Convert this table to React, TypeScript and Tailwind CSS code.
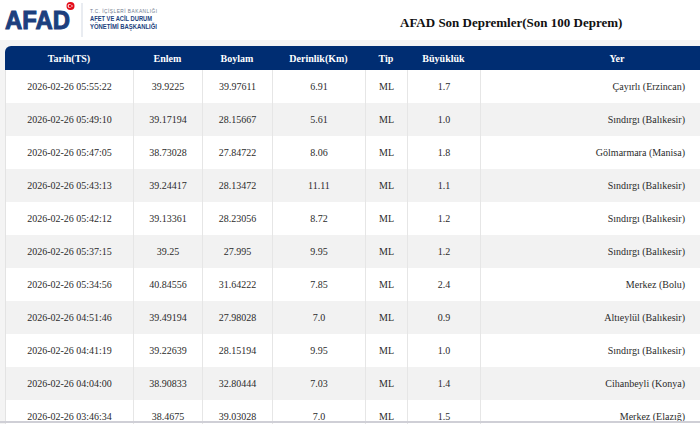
import React from "react";

const rows: string[][] = [
  ["2026-02-26 05:55:22", "39.9225", "39.97611", "6.91", "ML", "1.7", "Çayırlı (Erzincan)"],
  ["2026-02-26 05:49:10", "39.17194", "28.15667", "5.61", "ML", "1.0", "Sındırgı (Balıkesir)"],
  ["2026-02-26 05:47:05", "38.73028", "27.84722", "8.06", "ML", "1.8", "Gölmarmara (Manisa)"],
  ["2026-02-26 05:43:13", "39.24417", "28.13472", "11.11", "ML", "1.1", "Sındırgı (Balıkesir)"],
  ["2026-02-26 05:42:12", "39.13361", "28.23056", "8.72", "ML", "1.2", "Sındırgı (Balıkesir)"],
  ["2026-02-26 05:37:15", "39.25", "27.995", "9.95", "ML", "1.2", "Sındırgı (Balıkesir)"],
  ["2026-02-26 05:34:56", "40.84556", "31.64222", "7.85", "ML", "2.4", "Merkez (Bolu)"],
  ["2026-02-26 04:51:46", "39.49194", "27.98028", "7.0", "ML", "0.9", "Altıeylül (Balıkesir)"],
  ["2026-02-26 04:41:19", "39.22639", "28.15194", "9.95", "ML", "1.0", "Sındırgı (Balıkesir)"],
  ["2026-02-26 04:04:00", "38.90833", "32.80444", "7.03", "ML", "1.4", "Cihanbeyli (Konya)"],
  ["2026-02-26 03:46:34", "38.4675", "39.03028", "7.0", "ML", "1.5", "Merkez (Elazığ)"],
];

const headers = ["Tarih(TS)", "Enlem", "Boylam", "Derinlik(Km)", "Tip", "Büyüklük", "Yer"];

function Logo() {
  return (
    <svg width="170" height="40" viewBox="0 0 170 40">
      <text
        x="5"
        y="29"
        fontFamily="'Liberation Sans', Arial, sans-serif"
        fontWeight="900"
        fontSize="25"
        fill="#1c3f7e"
        textLength="65"
        lengthAdjust="spacingAndGlyphs"
        stroke="#1c3f7e"
        strokeWidth="1"
      >
        AFAD
      </text>
      <circle cx="70.5" cy="6" r="4" fill="#e30a17" />
      <circle cx="69.6" cy="6" r="2" fill="#ffffff" />
      <circle cx="70.2" cy="6" r="1.6" fill="#e30a17" />
      <circle cx="72" cy="6" r="0.7" fill="#ffffff" />
      <line x1="82" y1="3" x2="82" y2="37" stroke="#d3d9e3" strokeWidth="1" />
      <text
        x="90"
        y="12.5"
        fontFamily="'Liberation Sans', Arial, sans-serif"
        fontSize="4.8"
        fill="#6f7a8e"
        textLength="67"
        lengthAdjust="spacing"
      >
        T.C. İÇİŞLERİ BAKANLIĞI
      </text>
      <text
        x="90"
        y="21"
        fontFamily="'Liberation Sans', Arial, sans-serif"
        fontWeight="700"
        fontSize="6.6"
        fill="#1c3f7e"
        textLength="62"
        lengthAdjust="spacingAndGlyphs"
      >
        AFET VE ACİL DURUM
      </text>
      <text
        x="90"
        y="28.5"
        fontFamily="'Liberation Sans', Arial, sans-serif"
        fontWeight="700"
        fontSize="6.6"
        fill="#1c3f7e"
        textLength="67"
        lengthAdjust="spacingAndGlyphs"
      >
        YÖNETİMİ BAŞKANLIĞI
      </text>
    </svg>
  );
}

export default function App() {
  return (
    <div
      className="relative w-[700px] h-[424px] overflow-hidden bg-[#f4f4f4]"
      style={{ fontFamily: "'Liberation Serif', 'Times New Roman', serif" }}
    >
      <div className="h-[40px] bg-white flex items-center">
        <Logo />
        <h1 className="ml-[230px] text-[13px] font-bold text-[#111] leading-none mt-[4px]">
          AFAD Son Depremler(Son 100 Deprem)
        </h1>
      </div>
      <div className="pt-[6px] pl-[5px]">
        <div className="w-[749px]">
          <div className="grid grid-cols-[128px_69px_70px_93px_42px_73px_274px] h-[24px] bg-[#002d72] rounded-t-[6px] text-white text-[10px] font-bold">
            {headers.map((h) => (
              <div key={h} className="flex items-center justify-center">
                {h}
              </div>
            ))}
          </div>
          {rows.map((r, i) => (
            <div
              key={i}
              className={`grid grid-cols-[128px_69px_70px_93px_42px_73px_274px] h-[33px] text-[10px] text-[#2b2b2b] border-l border-[#e3e3e3] ${
                i % 2 === 1 ? "bg-[#f2f2f2]" : "bg-white"
              }`}
            >
              {r.map((c, j) => (
                <div
                  key={j}
                  className={`flex items-center border-r border-[#e6e6e6] ${
                    j === 6 ? "justify-end pr-[69px]" : "justify-center"
                  }`}
                >
                  {c}
                </div>
              ))}
            </div>
          ))}
        </div>
      </div>
      <div className="absolute left-0 right-0 bottom-[1px] h-[2px] bg-[#cfcfd6]" />
    </div>
  );
}
